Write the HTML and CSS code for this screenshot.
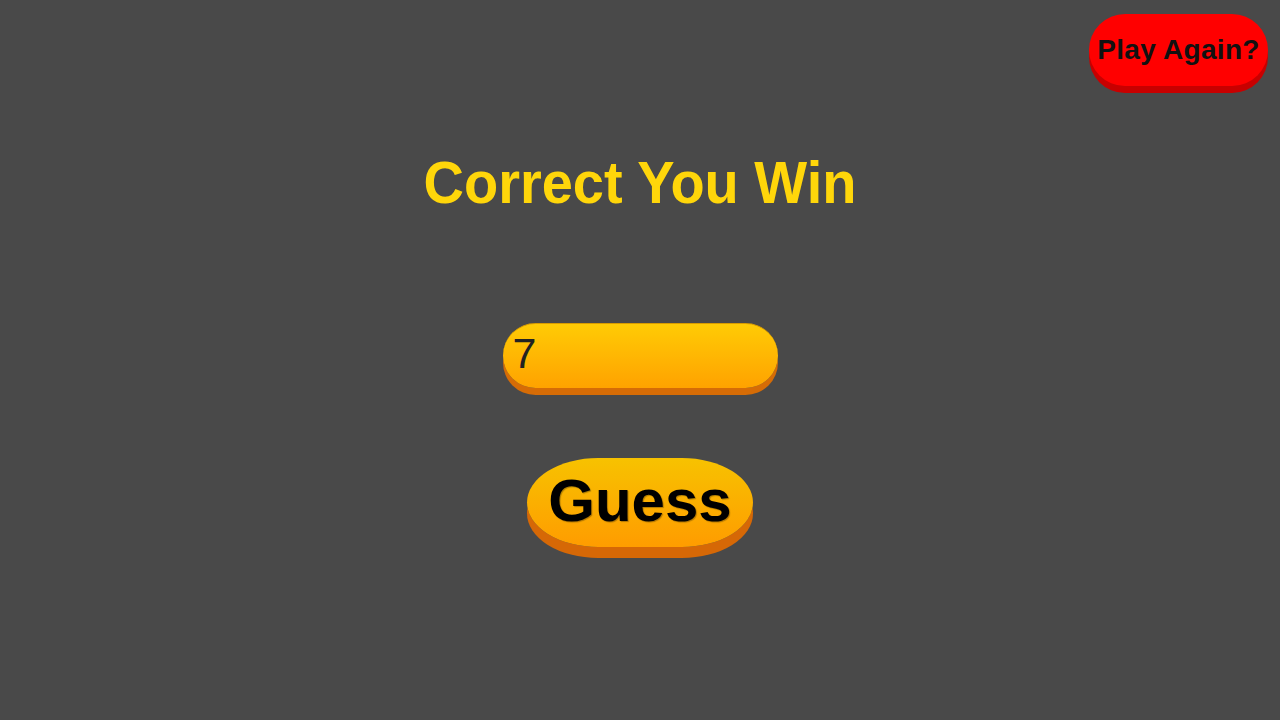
FILE: index.html
```html
<!DOCTYPE html>
<html lang="en">
<head>
<meta charset="utf-8">
<title>Guess the Number</title>
<link rel="stylesheet" href="styles.css">
</head>
<body>
<button class="play-again" type="button">Play Again?</button>
<main class="game">
  <h1 class="result">Correct You Win</h1>
  <input class="guess-input" type="text" value="7">
  <button class="guess-btn" type="button">Guess</button>
</main>
</body>
</html>
```
FILE: styles.css
```css
html, body {
  margin: 0;
  padding: 0;
  height: 100%;
}
body {
  background: #494949;
  font-family: "Liberation Sans", Arial, sans-serif;
  overflow: hidden;
  position: relative;
}
.game {
  display: flex;
  flex-direction: column;
  align-items: center;
  padding-top: 153px;
}
.result {
  margin: 0;
  font-size: 56px;
  line-height: 60px;
  height: 61px;
  font-weight: bold;
  color: #ffd60a;
  transform: scaleY(1.06);
}
.guess-input {
  box-sizing: border-box;
  margin-top: 109px;
  width: 275px;
  height: 65px;
  border: none;
  border-top: 1px solid #d99c00;
  border-radius: 33px;
  background: linear-gradient(#ffcb05, #ffa200);
  box-shadow: 0 7px 0 #d66c06;
  padding: 0 10px 5px 10px;
  font-family: "Liberation Sans", Arial, sans-serif;
  font-size: 43px;
  color: #222;
  outline: none;
}
.guess-btn {
  box-sizing: border-box;
  margin-top: 70px;
  width: 226px;
  height: 89px;
  border: none;
  border-radius: 72px / 45px;
  background: linear-gradient(#f7c200, #ff9c00);
  box-shadow: 0 11px 0 #d66806;
  font-family: "Liberation Sans", Arial, sans-serif;
  font-weight: bold;
  font-size: 60px;
  color: #000;
  text-shadow: 1px 1px 1px rgba(0, 0, 0, 0.3);
  padding: 0 0 4px;
  cursor: pointer;
}
.play-again {
  position: absolute;
  top: 14px;
  right: 12px;
  box-sizing: border-box;
  width: 179px;
  height: 72px;
  border: none;
  border-radius: 36px;
  background: #ff0000;
  box-shadow: 0 7px 0 #c80000;
  font-family: "Liberation Sans", Arial, sans-serif;
  font-weight: bold;
  font-size: 28px;
  letter-spacing: 0.3px;
  color: #111;
  padding: 0;
  white-space: nowrap;
  cursor: pointer;
}
```
